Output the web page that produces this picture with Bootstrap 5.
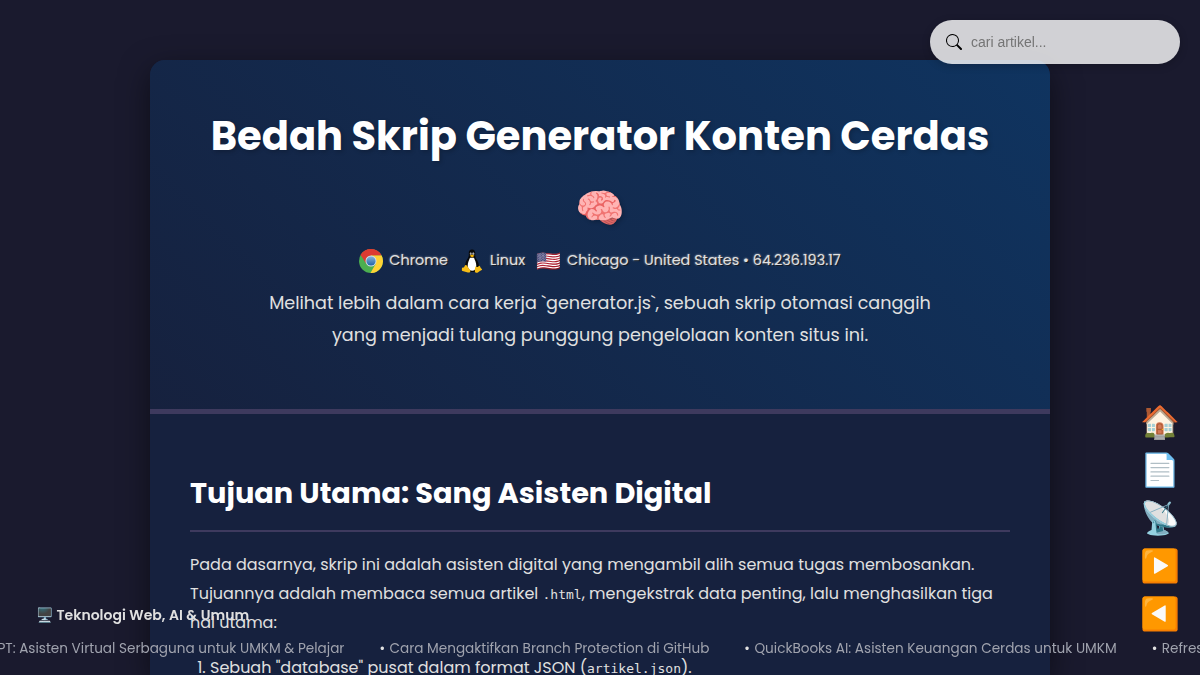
<!DOCTYPE html>
<html lang="id">
<head>
<meta charset="utf-8">
<meta name="viewport" content="width=device-width, initial-scale=1">
<title>Bedah Skrip Generator Konten Cerdas</title>
<link rel="stylesheet" href="https://cdn.jsdelivr.net/npm/bootstrap@5.3.0/dist/css/bootstrap.min.css">
<style>
html, body { height: 100%; }
body { font-family: "Poppins", "Inter", sans-serif; background: #1a1a2e; color: #e0e0e0; line-height: 1.8; overflow: hidden; }
.article-box { width: 900px; margin-top: 60px; background: #16213e; border-radius: 15px 15px 0 0; box-shadow: 0 10px 30px rgba(0,0,0,.5); overflow: hidden; height: 615px; }
.article-head { height: 354px; padding: 40px; border-bottom: 5px solid #3e3a5e; background: linear-gradient(45deg, #16213e, #0f3460); }
.article-head h1 { font-size: 40px; font-weight: 700; line-height: 1.8; color: #fff; margin: 0; text-shadow: 2px 2px 4px rgba(0,0,0,.2); }
.visitor { height: 32px; font-size: 14.4px; line-height: 32px; text-shadow: 1px 1px 1px rgba(0,0,0,.8), 0 0 2px rgba(255,255,255,.75); }
.visitor svg { width: 24px; height: 24px; margin-top: 5px; }
.visitor .flag { font-size: 20px; width: 24px; text-shadow: none; margin-top: 1px; margin-left: 11px; margin-right: 1px; }
.visitor .gap-icon { margin-left: 12px; }
.visitor .label-text { margin-left: 6px; }
.tagline { font-size: 17.6px; max-width: 700px; margin: 12px auto 0; }
.article-body { padding: 54px 40px 0; }
.article-body h2 { font-size: 28.8px; font-weight: 700; line-height: 1.8; color: #fff; padding-bottom: 10px; margin-bottom: 19.600px; border-bottom: 2px solid #3e3a5e; }
.article-body p { margin-bottom: 16.400px; }
.article-body ol { padding-left: 20px; margin: 0; }
code { font-family: "DejaVu Sans Mono", monospace; font-size: 13px; color: #e0e0e0; }
.search-pill { top: 20px; right: 20px; width: 250px; height: 44px; padding: 0 16px; gap: 9px; background: rgba(255,255,255,.8); box-shadow: 0 2px 8px rgba(0,0,0,.2); }
.search-pill input { font: 14px "Liberation Sans", sans-serif; }
.search-pill input::placeholder { color: #757575; }
.side-nav { right: 20px; bottom: 37px; width: 40px; font-size: 32px; line-height: 48px; }
.side-nav a { height: 48px; }
.category { left: 36px; bottom: 47px; font-size: 14px; font-weight: 600; line-height: 25px; word-spacing: .2px; }
.ticker { left: 0; bottom: 14px; width: 1200px; height: 24px; font-size: 13.6px; line-height: 24px; overflow: hidden; }
.ticker-run { gap: 35px; margin-left: -56.500px; }
.ticker-run a { color: #a0a3ae; margin-left: .8px; }
</style>
</head>
<body>
<main class="article-box mx-auto">
  <header class="article-head text-center">
    <h1>Bedah Skrip Generator Konten Cerdas 🧠</h1>
    <div class="visitor d-flex justify-content-center">
      <svg viewBox="0 0 48 48"><defs><linearGradient id="cb" x2="0" y2="1"><stop stop-color="#86b5dc"/><stop offset="1" stop-color="#2062a8"/></linearGradient></defs>
        <circle cx="24" cy="24" r="24" fill="#4caf50"/><path d="M24 24 3.2 12A24 24 0 0 1 44.8 12L24 13Z" fill="#dd3b32"/><path d="M3.2 12 14.5 29.5 24 13H44.8A24 24 0 0 0 3.2 12Z" fill="#dd3b32"/><path d="M24 13H45.3A24 24 0 0 1 23 48L33.5 29.5Z" fill="#ffd335"/><circle cx="24" cy="24" r="11" fill="#d5e2e8"/><circle cx="24" cy="24" r="9.200" fill="url(#cb)"/></svg>
      <span class="label-text">Chrome</span>
      <svg class="gap-icon" viewBox="0 0 24 24"><path d="M12 .5C9.700.5 8.600 2.200 8.800 4.600c.2 2.600-.2 3.500-1.700 5.800C5.500 12.800 5 15.500 5.300 18.500L9 23h6l4-4.500c.1-3.200-.9-6-2.500-8.200C15 8.300 15.300 7 15.300 4.500 15.300 2 14.200.5 12 .5Z" fill="#080808"/><path d="M10 8.700c-.7 2-2.400 4.500-2.300 8.200C8 20 10 21.800 12.200 21.800c2.300 0 4-2 4.100-5 .1-3.500-1.600-5.800-2.300-8.100Z" fill="#fff"/><ellipse cx="10.700" cy="4.800" rx=".9" ry="1.200" fill="#ddd"/><ellipse cx="13.300" cy="4.800" rx="1" ry="1.200" fill="#ddd"/><circle cx="10.900" cy="5" r=".5"/><circle cx="13.100" cy="5" r=".5"/><path d="M9.700 6.700 12 5.600l2.500 1.100-2.400 1.900Z" fill="#f5b300"/><path d="M5.300 16.200c1-.4 1.800.5 2.500 1.700l2.400 3.300c.7 1.500-.6 2.700-2.400 2.300L2.500 22c-1-.4-.5-1.500-.6-2.500-.1-1.200 1.700-.6 2.300-1.500.4-.7.500-1.500 1.100-1.800ZM15.700 17.300c.5 1 2.600 1 3.300-.5 1.200 0 1.100 1.500 1.800 2.300.5.700 1.600 1 1.200 1.700-.7.900-2.400 1.100-4.100 2.600-1.500.9-3.200.3-3.100-1.500.2-1.500.2-3.600.9-4.600Z" fill="#f8bd16"/></svg>
      <span class="label-text">Linux</span>
      <span class="flag">🇺🇸</span>
      <span class="label-text">Chicago - United States • 64.236.193.17</span>
    </div>
    <p class="tagline">Melihat lebih dalam cara kerja `generator.js`, sebuah skrip otomasi canggih yang menjadi tulang punggung pengelolaan konten situs ini.</p>
  </header>
  <section class="article-body">
    <h2>Tujuan Utama: Sang Asisten Digital</h2>
    <p>Pada dasarnya, skrip ini adalah asisten digital yang mengambil alih semua tugas membosankan. Tujuannya adalah membaca semua artikel <code>.html</code>, mengekstrak data penting, lalu menghasilkan tiga hal utama:</p>
    <ol><li>Sebuah "database" pusat dalam format JSON (<code>artikel.json</code>).</li></ol>
  </section>
</main>

<div class="search-pill position-fixed rounded-pill d-flex align-items-center">
  <svg width="16" height="16" viewBox="0 0 16 16" fill="#000"><path d="M11.742 10.344a6.500 6.500 0 1 0-1.397 1.398h-.001c.03.04.062.078.098.115l3.850 3.850a1 1 0 0 0 1.415-1.414l-3.850-3.850a1.007 1.007 0 0 0-.115-.1zM12 6.500a5.500 5.500 0 1 1-11 0 5.500 5.500 0 0 1 11 0z"/></svg>
  <input class="border-0 bg-transparent p-0 w-75" type="text" placeholder="cari artikel...">
</div>

<nav class="side-nav position-fixed d-flex flex-column align-items-center">
  <a class="text-decoration-none">🏠</a><a class="text-decoration-none">📄</a><a class="text-decoration-none">📡</a><a class="text-decoration-none">▶️</a><a class="text-decoration-none">◀️</a>
</nav>

<div class="category position-fixed">🖥️ Teknologi Web, AI &amp; Umum</div>
<div class="ticker position-fixed">
  <div class="ticker-run d-flex text-nowrap">
    <span>• <a class="text-decoration-none">ChatGPT: Asisten Virtual Serbaguna untuk UMKM &amp; Pelajar</a></span>
    <span>• <a class="text-decoration-none">Cara Mengaktifkan Branch Protection di GitHub</a></span>
    <span>• <a class="text-decoration-none">QuickBooks AI: Asisten Keuangan Cerdas untuk UMKM</a></span>
    <span>• <a class="text-decoration-none">Refresh Halaman Otomatis</a></span>
  </div>
</div>
<script src="https://cdn.jsdelivr.net/npm/bootstrap@5.3.0/dist/js/bootstrap.bundle.min.js"></script>
</body>
</html>
